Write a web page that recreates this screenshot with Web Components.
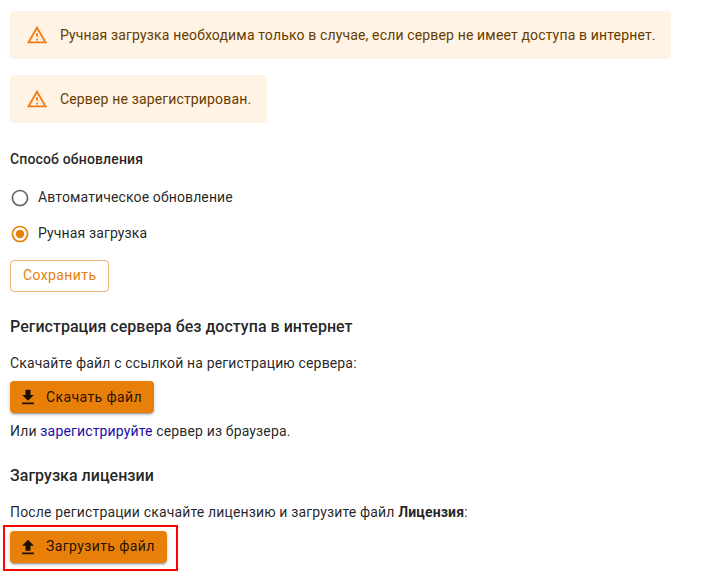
<!DOCTYPE html>
<html lang="ru">
<head>
<meta charset="utf-8">
<title>Лицензия</title>
<style>
body{margin:0;background:#fff;color:rgba(0,0,0,.87);font:400 14px/20px Roboto,"Noto Sans",sans-serif;letter-spacing:.15px}
</style>
</head>
<body>
<license-page></license-page>
<script>
const define = (name, html) => customElements.define(name, class extends HTMLElement {
  constructor() {
    super();
    this.attachShadow({mode: 'open'}).innerHTML = html;
  }
});

define('alert-box', `<style>
:host{display:flex;align-items:center;box-sizing:border-box;width:max-content;height:48px;padding:0 15.5px 0 16px;gap:12px;border-radius:4px;background:#fff3e5;color:#663c00}
svg{width:22px;height:22px;fill:#f57c13;flex:none}
</style><svg viewBox="0 0 24 24"><path d="M12 5.99L19.53 19H4.47L12 5.99M12 2L1 21h22L12 2zm1 14h-2v2h2v-2zm0-6h-2v4h2v-4z"/></svg><span><slot></slot></span>`);

define('radio-item', `<style>
:host{display:flex;align-items:center;height:36px;gap:8px;letter-spacing:.13px}
svg{width:20px;height:20px;fill:#666;flex:none}
span{padding-bottom:2px}
.dot{display:none}
:host([checked]) svg{fill:#e87f09}
:host([checked]) .dot{display:block}
</style><svg viewBox="0 0 24 24"><path d="M12 2C6.48 2 2 6.48 2 12s4.48 10 10 10 10-4.48 10-10S17.52 2 12 2zm0 18c-4.42 0-8-3.58-8-8s3.58-8 8-8 8 3.58 8 8-3.58 8-8 8z"/><circle class="dot" cx="12" cy="12" r="5"/></svg><span><slot></slot></span>`);

define('action-button', `<style>
:host{display:flex;box-sizing:border-box;align-items:center;width:max-content;height:32px;border-radius:4px;letter-spacing:.4px;padding:0 12px 0 10px;gap:10px;background:#e87f09;color:rgba(0,0,0,.87);box-shadow:0 3px 1px -2px rgba(0,0,0,.2),0 2px 2px rgba(0,0,0,.14),0 1px 5px rgba(0,0,0,.12)}
:host([outlined]){background:none;box-shadow:none;border:1px solid rgba(232,127,9,.6);color:#e87f09;padding:0 11.5px 0 12px}
:host([raised-label]) span{padding-bottom:2px}
</style><slot name="icon"></slot><span><slot></slot></span>`);

define('file-icon', `<style>
:host{display:block;width:16px;height:16px}
svg{display:block;width:16px;height:16px;fill:rgba(0,0,0,.87)}
.up{display:none}
:host([up]) .up{display:block}
:host([up]) .down{display:none}
</style><svg viewBox="4 2 16 19"><path class="down" d="M19 9h-4V3H9v6H5l7 7 7-7zM5 18v2h14v-2H5z"/><path class="up" d="M9 16h6v-6h4l-7-7-7 7h4v6zm-4 2h14v2H5v-2z"/></svg>`);

define('license-page', `<style>
:host{display:flex;flex-direction:column;align-items:flex-start;padding:11px 10px 0}
alert-box+alert-box{margin-top:16px}
h2,h3,p{margin:0}
h3{font-size:14px;font-weight:500;line-height:20px;margin:26px 0 11px}
h2{font-size:16px;font-weight:500;line-height:24px;letter-spacing:.02px}
a{color:#1a0dab;text-decoration:none}
b{font-weight:700}
.save{margin-top:8px}
.reg{margin-top:23px}
.reg+p{margin:14px 0 8px}
.link{margin-top:8px}
.load{margin-top:23px}
.load+p{margin-top:14px}
.frame{border:2px solid #f00;padding:4px 9px 6px 5px;margin:3px 0 0 -7px}
</style>
<alert-box>Ручная загрузка необходима только в случае, если сервер не имеет доступа в интернет.</alert-box>
<alert-box>Сервер не зарегистрирован.</alert-box>
<h3>Способ обновления</h3>
<radio-item>Автоматическое обновление</radio-item>
<radio-item checked>Ручная загрузка</radio-item>
<action-button class="save" outlined raised-label>Сохранить</action-button>
<h2 class="reg">Регистрация сервера без доступа в интернет</h2>
<p>Скачайте файл с ссылкой на регистрацию сервера:</p>
<action-button><file-icon slot="icon"></file-icon>Скачать файл</action-button>
<p class="link">Или <a href="#">зарегистрируйте</a> сервер из браузера.</p>
<h2 class="load">Загрузка лицензии</h2>
<p>После регистрации скачайте лицензию и загрузите файл <b>Лицензия</b>:</p>
<div class="frame"><action-button raised-label><file-icon slot="icon" up></file-icon>Загрузить файл</action-button></div>`);
</script>
</body>
</html>
